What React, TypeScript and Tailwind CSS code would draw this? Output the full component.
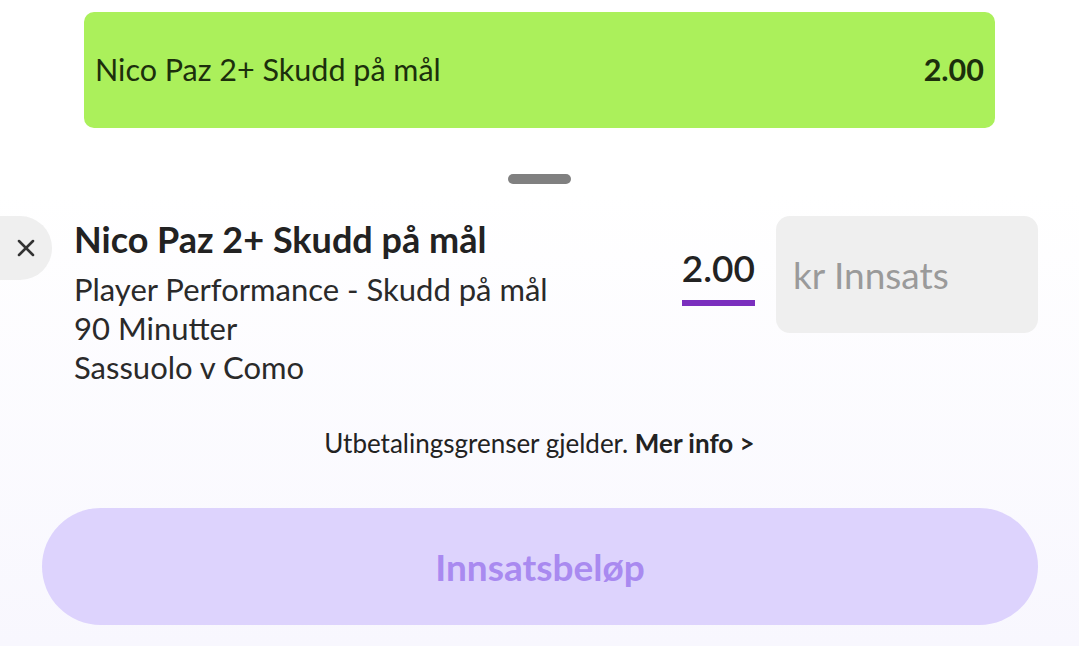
import { X } from 'lucide-react';

export default function App() {
  return (
    <div
      className="w-[1079px] h-[646px] overflow-hidden bg-gradient-to-b from-white from-30% to-[#f8f7fe] text-[#222]"
      style={{ fontFamily: 'Lato, "Open Sans", sans-serif' }}
    >
      {/* selected pick */}
      <div className="pt-[12px] px-[84px]">
        <div className="h-[116px] rounded-[10px] bg-[#abf05b] flex items-center justify-between pl-[11px] pr-[11px] text-[#1c2f0c]">
          <span className="text-[30.5px]">Nico Paz 2+ Skudd på mål</span>
          <span className="text-[30.5px] font-bold">2.00</span>
        </div>
      </div>

      <div className="flex justify-center mt-[46px]">
        <div className="w-[63px] h-[10px] rounded-full bg-[#808080]" />
      </div>

      {/* bet row */}
      <div className="flex mt-[32px]">
        <div className="w-[52px] h-[64px] mr-[22px] rounded-r-[32px] bg-[#efefef] flex items-center justify-center shrink-0">
          <X className="w-[28px] h-[28px] text-[#333]" strokeWidth={2.2} />
        </div>
        <div className="flex-1">
          <div className="text-[36px] font-bold leading-[48px] text-[#222] -mt-[1px]">Nico Paz 2+ Skudd på mål</div>
          <div className="text-[31px] leading-[39px] text-[#2a2a2a] mt-[7px]">
            <div>Player Performance - Skudd på mål</div>
            <div>90 Minutter</div>
            <div>Sassuolo v Como</div>
          </div>
        </div>
        <div className="flex flex-col items-center mt-[30px] mr-[21px]">
          <span className="text-[37px] font-semibold leading-[44px] text-[#222]">2.00</span>
          <div className="w-[73px] h-[6px] bg-[#7b2fbe] mt-[10px]" />
        </div>
        <div className="w-[262px] h-[117px] mr-[41px] rounded-[14px] bg-[#efefef] flex pt-[35px] pl-[17px] shrink-0">
          <span className="text-[37px] leading-[48px] text-[#9a9a9a]">kr Innsats</span>
        </div>
      </div>

      <div className="text-center text-[26px] mt-[37px] text-[#222]">
        Utbetalingsgrenser gjelder. <span className="font-bold">Mer info &gt;</span>
      </div>

      <div className="px-[42px] mt-[45px]">
        <div className="h-[117px] w-[996px] rounded-full bg-[#ddd3fd] flex items-center justify-center">
          <span className="text-[37px] font-bold text-[#a98af0]">Innsatsbeløp</span>
        </div>
      </div>
    </div>
  );
}
